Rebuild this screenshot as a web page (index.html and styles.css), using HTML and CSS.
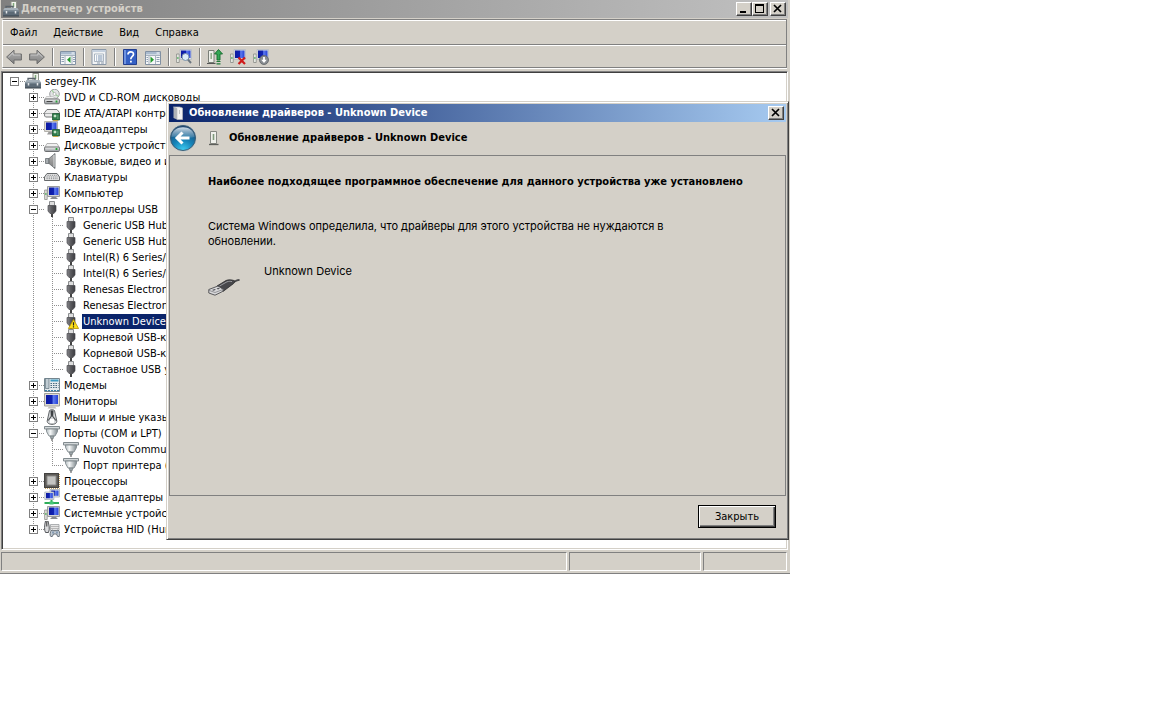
FILE: index.html
```html
<!DOCTYPE html>
<html lang="ru">
<head>
<meta charset="utf-8">
<title>Диспетчер устройств</title>
<link rel="stylesheet" href="styles.css">
</head>
<body>
<svg class="sprite" aria-hidden="true">
  <defs>
    <linearGradient id="g-steel" x1="0" y1="0" x2="0" y2="1"><stop offset="0" stop-color="#fafafa"/><stop offset="1" stop-color="#8f9498"/></linearGradient>
    <linearGradient id="g-funnel" x1="0" y1="0" x2="1" y2="0"><stop offset="0" stop-color="#b3bcc0"/><stop offset=".35" stop-color="#f6f8f8"/><stop offset="1" stop-color="#7f898e"/></linearGradient>
    <linearGradient id="g-dark" x1="0" y1="0" x2="1" y2="0"><stop offset="0" stop-color="#86868a"/><stop offset=".45" stop-color="#5c5c60"/><stop offset="1" stop-color="#3c3c40"/></linearGradient>
    <linearGradient id="g-screen" x1="0" y1="0" x2="1" y2="0"><stop offset="0" stop-color="#0d1aa0"/><stop offset=".5" stop-color="#0f22b4"/><stop offset=".6" stop-color="#5f7cf0"/><stop offset="1" stop-color="#2440d6"/></linearGradient>
    <linearGradient id="g-arrow" x1="0" y1="0" x2="0" y2="1"><stop offset="0" stop-color="#b4b4b4"/><stop offset="1" stop-color="#7e7e7e"/></linearGradient>
    <radialGradient id="g-back" cx=".5" cy="1" r=".95"><stop offset="0" stop-color="#3fd0f5"/><stop offset=".45" stop-color="#1583b8"/><stop offset="1" stop-color="#1c4470"/></radialGradient>
    <linearGradient id="g-gloss" x1="0" y1="0" x2="0" y2="1"><stop offset="0" stop-color="#e6f0f6" stop-opacity=".9"/><stop offset="1" stop-color="#9fc0d4" stop-opacity=".25"/></linearGradient>
  </defs>
  <symbol id="i-root" viewBox="0 0 16 16">
    <rect x="8" y=".5" width="5.500" height="8" fill="#f2f4ee" stroke="#8f948a"/><path d="M10.500 2v4" stroke="#7fa878" stroke-width="1.500"/>
    <path d="M3 8V5.500h7V8" fill="none" stroke="#5b646c" stroke-width="1.300"/>
    <path d="M1.500 7h13L16 9.500H0z" fill="#a5b0b9"/><path d="M0 9.500h16V15H0z" fill="#5c6a76"/><path d="M0 9.500h16v1H0z" fill="#8594a1"/><path d="M0 15h16" stroke="#39434b"/>
    <path d="M3.500 10v2.500M12.500 10v2.500" stroke="#e2e5e8" stroke-width="1.500"/>
  </symbol>
  <symbol id="i-dvd" viewBox="0 0 16 16">
    <circle cx="10.500" cy="5" r="4.800" fill="#e4e6e6" stroke="#9c9fa1"/><path d="M10.500 5 8 1.200M10.500 5l4 2.500" stroke="#9fd09a" stroke-width="1.200"/><circle cx="10.500" cy="5" r="1.500" fill="#fff" stroke="#999" stroke-width=".6"/>
    <path d="M2.500 7.500h6l5 2.500H.8z" fill="#efefef" stroke="#b0b0b0" stroke-width=".6"/>
    <rect x=".6" y="10" width="14.800" height="4.800" rx="1" fill="url(#g-steel)" stroke="#6c6e70" stroke-width="1"/><path d="M2.500 12.500h6" stroke="#444"/><path d="M12.500 11.500v2" stroke="#29a338" stroke-width="1.800"/>
  </symbol>
  <symbol id="i-disk" viewBox="0 0 16 16">
    <path d="M3 6.500h10l2.400 4H.6z" fill="#f0f0f0" stroke="#a2a2a2" stroke-width=".8"/>
    <rect x=".6" y="10" width="14.800" height="4.500" rx="1" fill="url(#g-steel)" stroke="#6c6e70"/><path d="M12.500 11v2" stroke="#29a338" stroke-width="1.800"/>
  </symbol>
  <symbol id="i-card" viewBox="0 0 8 8">
    <path d="M.5.500h7v6.500h-7z" fill="#2f7d4b" stroke="#215a36" stroke-width=".8"/><path d="M2 2h2v2H2zM5 3h1.500M5 5h1.500" fill="#c4e2c8" stroke="#c4e2c8" stroke-width=".5"/><path d="M1 7.500h5" stroke="#c8a94a"/>
  </symbol>
  <symbol id="i-ide" viewBox="0 0 16 16">
    <path d="M3 4.500h10l2.400 3v3.500l-1 1H1.600l-1-1V7.500z" fill="#ececec" stroke="#77797b"/><path d="M1 8.500h14" stroke="#a8aaab"/>
    <use href="#i-card" x="8" y="8" width="8" height="8"/>
  </symbol>
  <symbol id="i-monitor" viewBox="0 0 16 16">
    <path d="M.5.500h15v12.500H.5z" fill="#dcdad4" stroke="#a3a19b"/><path d="M2 2h12v9H2z" fill="url(#g-screen)"/><path d="M5 13.500h6l1.500 2h-9z" fill="#c3c1bb"/>
  </symbol>
  <symbol id="i-video" viewBox="0 0 16 16">
    <path d="M.5.500h13v10H.5z" fill="#dcdad4" stroke="#b4b2ac"/><path d="M2 1.500h10.500V9H2z" fill="url(#g-screen)"/><path d="M4.500 11h4l1 2.500H3z" fill="#999"/>
    <use href="#i-card" x="8" y="8" width="8" height="8"/>
  </symbol>
  <symbol id="i-sound" viewBox="0 0 16 16">
    <path d="M1.500 5.500H5v5H1.500z" fill="#a7adb0" stroke="#686d71" stroke-width=".8"/><path d="M5 5.500 11 .5v15L5 10.500z" fill="url(#g-arrow)" stroke="#62676b" stroke-width=".8"/><path d="M10 2v12" stroke="#dcdfe0"/>
  </symbol>
  <symbol id="i-keyboard" viewBox="0 0 16 16">
    <path d="M3 4.500h10l2.500 3.500v3.500H.5V8z" fill="#e2e2e2" stroke="#66696b"/><path d="M3.500 6.300h9.500M2.500 8h11.500M2.500 9.700h11.500" stroke="#888b8e" stroke-dasharray="1.200 1"/>
  </symbol>
  <symbol id="i-computer" viewBox="0 0 16 16">
    <path d="M.6 5h2.600v9.500H.6z" fill="#e0e0da" stroke="#90918d" stroke-width=".8"/><path d="M1.900 8v2" stroke="#39a545"/>
    <path d="M3.500 1.500h12v10h-12z" fill="#d7d7d3" stroke="#9b9c9f"/><path d="M5 2.500h9.500v7.500H5z" fill="url(#g-screen)"/><path d="M8 12h4l2 2H6z" fill="#888b90"/>
  </symbol>
  <symbol id="i-usb" viewBox="0 0 16 16">
    <path d="M5.500.500h5V5h-5z" fill="#dedede" stroke="#8c8e90"/><path d="M4 4.500h8V10l-2 2.500H6L4 10z" fill="url(#g-dark)" stroke="#4c4c50" stroke-width=".7"/><path d="M7 12.500h2V16H7z" fill="#444"/>
  </symbol>
  <symbol id="i-usb-warn" viewBox="0 0 16 16">
    <use href="#i-usb" width="16" height="16"/><path d="M10.500 6.500 15.600 15.500H5.400z" fill="#ffe21a" stroke="#b39000" stroke-width=".8"/><path d="M10.500 9.300v3.200M10.500 13.200v1.200" stroke="#222" stroke-width="1.200"/>
  </symbol>
  <symbol id="i-modem" viewBox="0 0 16 16">
    <path d="M.5 1.500h15v13H.5z" fill="#e4e9ec" stroke="#75868f"/><path d="M1.500 1.500h3.500v10H1.500z" fill="#c0ccd3" stroke="#617480" stroke-width=".7"/><path d="M6.500 2.500h8v2h-8z" fill="#3d9ac2"/><path d="M6.500 6.500h8M6.500 8.500h8M6.500 10.500h8" stroke="#4a6b80" stroke-dasharray="1.500 1"/><path d="M1 13.500h14" stroke="#3782a8" stroke-dasharray="2 1"/>
  </symbol>
  <symbol id="i-mouse" viewBox="0 0 16 16">
    <path d="M5.500 1.500C6 .5 10 .5 10.500 1.500l2.300 10.500c.5 4.500-10 4.500-9.600 0z" fill="#d6d8da" stroke="#5f6366"/><path d="M6.500 1.500h3L9.200 7H6.800z" fill="#3c4043"/><path d="M4.200 11.500 7.500 7h1l3.300 4.500" fill="none" stroke="#4c5053" stroke-width="1.200"/><path d="M6 10h4v4H6z" fill="#fff"/>
  </symbol>
  <symbol id="i-port" viewBox="0 0 16 16">
    <path d="M.5 1.500h15v2.500H.5z" fill="#d3d8da" stroke="#828b8f"/><path d="M2.500 4h11v2.500L11 11H5L2.500 6.500z" fill="url(#g-funnel)" stroke="#7f888c" stroke-width=".9"/><path d="M6 11h4l-1 3H7z" fill="#9aa3a7" stroke="#6c7579" stroke-width=".6"/><path d="M8 13.500V16" stroke="#777" stroke-width="1.300"/>
  </symbol>
  <symbol id="i-cpu" viewBox="0 0 16 16">
    <path d="M0 0h15v15H0z" fill="#5d5b58"/><path d="M1 15.500h14.500V1" fill="none" stroke="#c2a062" stroke-dasharray="1 1"/><path d="M.5.500h14v14H.5z" fill="none" stroke="#42413f"/><path d="M3 3h9v9H3z" fill="#c4c4c2" stroke="#8c8b88"/>
  </symbol>
  <symbol id="i-network" viewBox="0 0 16 16">
    <path d="M6 .5h9.500V8H6z" fill="#dfe4ea" stroke="#a6adb8" stroke-width=".8"/><path d="M7.200 1.500h7.300v5.300H7.200z" fill="url(#g-screen)"/><path d="M.8 3h9v7.500h-9z" fill="#dfe4ea" stroke="#a6adb8" stroke-width=".8"/><path d="M2 4h6.800v5.300H2z" fill="url(#g-screen)"/><path d="M7.500 11v3M.5 14h14.500" stroke="#2ead59" stroke-width="2"/><path d="M5.500 12.500h4v3h-4z" fill="#45c675"/>
  </symbol>
  <symbol id="i-hid" viewBox="0 0 16 16">
    <path d="M1.500 0h2.500c1 4 2 8 .5 11.500h-3C0 9 .5 4 1.500 0z" fill="#dcdddf" stroke="#54575b"/><path d="M2.800.5v5" stroke="#333"/><path d="M6.500 3.500H15v6H6.500z" fill="#e6e6e6" stroke="#9b9ea1" stroke-width=".8"/><path d="M7.500 5.500h7M7.500 7.500h7" stroke="#888" stroke-dasharray="1 1"/><path d="M8 9c2 1 4 1 6 0 2 1 2.500 5.500 1.200 6.500h-1.500L12.500 13h-3l-1.200 2.500H6.800C5.500 14.500 6 10 8 9z" fill="#c0c9d2" stroke="#5e676f" stroke-width=".9"/><path d="M9 10.500v2M13 10.500v2" stroke="#4d6f95"/>
  </symbol>
  <symbol id="i-left" viewBox="0 0 16 16">
    <path d="M.6 8 8 1.200V5h7.400v6H8v3.800z" fill="url(#g-arrow)" stroke="#6c6c6c"/><path d="M2.500 8 7 3.800V6h7.300" fill="none" stroke="#cfcfcf" stroke-width=".8"/>
  </symbol>
  <symbol id="i-right" viewBox="0 0 16 16">
    <path d="M15.400 8 8 1.200V5H.6v6H8v3.800z" fill="url(#g-arrow)" stroke="#6c6c6c"/><path d="M13.500 8 9 3.800V6H1.700" fill="none" stroke="#cfcfcf" stroke-width=".8"/>
  </symbol>
  <symbol id="i-pane-left" viewBox="0 0 16 16">
    <path d="M.5 2.500h15v13H.5z" fill="#f6f7f8" stroke="#8291a3"/><path d="M1 3h14v2.500H1z" fill="#a9bace"/><path d="M11.500 4h3" stroke="#fff"/><path d="M5 6v9M12 6v9M1 6.500h14" stroke="#a7b2be"/><path d="M1.500 8.500h2.500M1.500 10.500h2.500M1.500 12.500h2.500M13 8.500h2M13 10.500h2M13 12.500h2" stroke="#8fa0b4"/><path d="M10.500 7.500v6.500L7 10.800z" fill="#259a2e"/>
  </symbol>
  <symbol id="i-pane-right" viewBox="0 0 16 16">
    <path d="M.5 2.500h15v13H.5z" fill="#f6f7f8" stroke="#8291a3"/><path d="M1 3h14v2.500H1z" fill="#a9bace"/><path d="M11.500 4h3" stroke="#fff"/><path d="M4 6v9M10.500 6v9M1 6.500h14" stroke="#a7b2be"/><path d="M1.500 8.500H3M1.500 10.500H3M1.500 12.500H3M11.500 8.500h3M11.500 10.500h3M11.500 12.500h3" stroke="#8fa0b4"/><path d="M5.500 7.500v6.500L9 10.800z" fill="#259a2e"/>
  </symbol>
  <symbol id="i-props" viewBox="0 0 16 16">
    <path d="M1 .5h14v15H1z" fill="#f1f3f5" stroke="#8b98a8"/><path d="M1.500 1h13v2H1.500z" fill="#c4d0de"/><path d="M3.500 5h9v7.500h-9z" fill="#fff" stroke="#98a4b2" stroke-width=".8"/><path d="M5 7h1.200M7 7h4.500M5 9h1.200M7 9h4.500M5 11h1.200M7 11h4.500" stroke="#6581a4" stroke-width=".9"/><path d="M6 14h3M10 14h3" stroke="#8b98a8"/>
  </symbol>
  <symbol id="i-help" viewBox="0 0 16 16">
    <path d="M1.500.500h13v15h-13z" fill="#3560c4" stroke="#243f8f"/><path d="M2 1h2v14H2z" fill="#6f93e0"/><path d="M6 5.500C6 2 11.500 2 11.500 5.300c0 2.200-2.700 2.200-2.700 5" fill="none" stroke="#fff" stroke-width="1.700"/><path d="M8 11.800h1.800v1.800H8z" fill="#fff"/>
  </symbol>
  <symbol id="i-scan" viewBox="0 0 16 16">
    <path d="M.6 5h2.600v8.500H.6z" fill="#eceee8" stroke="#878984" stroke-width=".8"/><path d="M1.900 8v2" stroke="#39a545"/><path d="M4 .5h11.500v10H4z" fill="#d7dbe0" stroke="#b5bbc5" stroke-width=".8"/><path d="M5 1.500h9.500V9H5z" fill="url(#g-screen)"/><circle cx="9.500" cy="8" r="3.500" fill="#dcecf8" stroke="#7890a8"/><path d="m12 10.700 3 3.300" stroke="#6c7780" stroke-width="2"/>
  </symbol>
  <symbol id="i-update" viewBox="0 0 16 16">
    <path d="M1.500 1.500h5.500v12H1.500z" fill="#eef0ea" stroke="#7a7f78"/><path d="M4.200 4v6" stroke="#8dab88" stroke-width="1.500"/><path d="M0 14.500h8.500" stroke="#555"/><path d="M11.500.5 15.500 5H13v6h-3V5H7.500z" fill="#34a855" stroke="#156b2d" stroke-width=".9"/><path d="M9.500 12.500h4M9.500 14.800h4" stroke="#1f7b38" stroke-width="1.200"/>
  </symbol>
  <symbol id="i-remove" viewBox="0 0 16 16">
    <path d="M.6 5h2.600v8.500H.6z" fill="#eceee8" stroke="#878984" stroke-width=".8"/><path d="M1.900 8v2" stroke="#39a545"/><path d="M4 .5h11.500v10H4z" fill="#d7dbe0" stroke="#b5bbc5" stroke-width=".8"/><path d="M5 1.500h9.500V9H5z" fill="url(#g-screen)"/><path d="m8.500 8.500 6.500 6.500M15 8.500 8.500 15" stroke="#cf1a1a" stroke-width="2.200"/>
  </symbol>
  <symbol id="i-disable" viewBox="0 0 16 16">
    <path d="M.6 5h2.600v8.500H.6z" fill="#eceee8" stroke="#878984" stroke-width=".8"/><path d="M1.900 8v2" stroke="#39a545"/><path d="M4 .5h11.500v10H4z" fill="#d7dbe0" stroke="#b5bbc5" stroke-width=".8"/><path d="M5 1.500h9.500V9H5z" fill="url(#g-screen)"/><circle cx="11" cy="11" r="4.500" fill="#878b90" stroke="#5f6367" stroke-width=".8"/><path d="M11 8v3.500" stroke="#fff" stroke-width="1.800"/><path d="M8.300 10.800h5.400L11 14z" fill="#fff"/>
  </symbol>
  <symbol id="i-device" viewBox="0 0 16 16">
    <path d="M4.500 1.500h6v12h-6z" fill="#f0f1ec" stroke="#868983"/><path d="M7.500 4v6" stroke="#7f9a7c" stroke-width="1.600"/><path d="M3 14.500h9.500" stroke="#5d5f5b" stroke-width="1.300"/>
  </symbol>
  <symbol id="i-case" viewBox="0 0 16 16">
    <path d="M3.500 2 7 3.500v11L3.500 13z" fill="#aeb2b6"/><path d="M3.500 2h6l3 1v11.500H7V3.500z" fill="#f3f3f1" stroke="#b9bbbd" stroke-width=".7"/><path d="M9.500 5v4" stroke="#c4c6c4"/>
  </symbol>
  <symbol id="i-back" viewBox="0 0 28 28">
    <circle cx="14" cy="14" r="13.500" fill="#bfc6ca"/><circle cx="14" cy="14" r="12.500" fill="url(#g-back)" stroke="#3d5e75"/><path d="M2.500 13C3 0 25 0 25.500 13 20 15 9 12 2.500 13z" fill="url(#g-gloss)"/><path d="M20.500 14H8.500M13.500 8.500 8 14l5.500 5.500" fill="none" stroke="#fff" stroke-width="3"/>
  </symbol>
  <symbol id="i-plug" viewBox="0 0 32 18">
    <path d="M31.500 1c-3 .2-4 1-6 2.500l1 1.300C28 3.500 29.500 3 31.500 3z" fill="#4a4a4c"/><path d="M9 8 18 2.500c2-1 6-.8 8.500.2.800 1-.5 3-2.500 4L15 13.500z" fill="#47474b" stroke="#2b2b2d" stroke-width=".8"/><path d="M11.500 8 19 3.800c2-.6 3.500-.6 5-.2" fill="none" stroke="#9b9ba0"/><path d="M.8 11.500 10 8l5.500 3.500-1 2L7 17.200.8 15z" fill="#d8d8da" stroke="#4b4b4e" stroke-width=".9"/><path d="m4 12 2.500-1 1.500.8-2.500 1zM8.500 10.500l2-.8 1.500.8-2 .9z" fill="#55555a"/><path d="m.8 12.300 6.200 2.200 8.500-3.200" fill="none" stroke="#77777b" stroke-width=".7"/>
  </symbol>
  <symbol id="i-min" viewBox="0 0 10 10"><path d="M1 7h6v2H1z"/></symbol>
  <symbol id="i-max" viewBox="0 0 10 10"><path d="M0 0h9v9H0zM1 2v6h7V2z" fill-rule="evenodd"/></symbol>
  <symbol id="i-close" viewBox="0 0 10 10"><path d="m1 1 7 7M8 1 1 8" stroke="#000" stroke-width="1.700"/></symbol>
</svg>

<main class="window">
  <header class="titlebar">
    <svg class="icon"><use href="#i-root"/></svg>
    <h1 class="titlebar-text">Диспетчер устройств</h1>
    <button class="caption-btn" aria-label="Свернуть"><svg><use href="#i-min"/></svg></button>
    <button class="caption-btn" aria-label="Развернуть"><svg><use href="#i-max"/></svg></button>
    <button class="caption-btn caption-close" aria-label="Закрыть окно"><svg><use href="#i-close"/></svg></button>
  </header>

  <div class="bars">
    <nav class="menubar">
      <button class="menu-item">Файл</button>
      <button class="menu-item">Действие</button>
      <button class="menu-item">Вид</button>
      <button class="menu-item">Справка</button>
    </nav>
    <div class="toolbar">
      <button class="tool" aria-label="Назад"><svg class="icon"><use href="#i-left"/></svg></button>
      <button class="tool" aria-label="Вперед"><svg class="icon"><use href="#i-right"/></svg></button>
      <span class="separator"></span>
      <button class="tool" aria-label="Дерево консоли"><svg class="icon"><use href="#i-pane-left"/></svg></button>
      <span class="separator"></span>
      <button class="tool" aria-label="Свойства"><svg class="icon"><use href="#i-props"/></svg></button>
      <span class="separator"></span>
      <button class="tool" aria-label="Помощь"><svg class="icon"><use href="#i-help"/></svg></button>
      <button class="tool" aria-label="Панель действий"><svg class="icon"><use href="#i-pane-right"/></svg></button>
      <span class="separator"></span>
      <button class="tool" aria-label="Обновить конфигурацию"><svg class="icon"><use href="#i-scan"/></svg></button>
      <span class="separator"></span>
      <button class="tool" aria-label="Обновить драйверы"><svg class="icon"><use href="#i-update"/></svg></button>
      <button class="tool" aria-label="Удалить"><svg class="icon"><use href="#i-remove"/></svg></button>
      <button class="tool" aria-label="Отключить"><svg class="icon"><use href="#i-disable"/></svg></button>
    </div>
  </div>

  <section class="pane">
    <ul class="tree">
      <li class="node root">
        <div class="row"><span class="cell"><button class="toggle" aria-label="Свернуть узел"></button></span><svg class="icon"><use href="#i-root"/></svg><span class="label">sergey-ПК</span></div>
        <ul class="tree">
          <li class="node"><div class="row"><span class="cell"><button class="toggle plus" aria-label="Развернуть узел"></button></span><svg class="icon"><use href="#i-dvd"/></svg><span class="label">DVD и CD-ROM дисководы</span></div></li>
          <li class="node"><div class="row"><span class="cell"><button class="toggle plus" aria-label="Развернуть узел"></button></span><svg class="icon"><use href="#i-ide"/></svg><span class="label">IDE ATA/ATAPI контроллеры</span></div></li>
          <li class="node"><div class="row"><span class="cell"><button class="toggle plus" aria-label="Развернуть узел"></button></span><svg class="icon"><use href="#i-video"/></svg><span class="label">Видеоадаптеры</span></div></li>
          <li class="node"><div class="row"><span class="cell"><button class="toggle plus" aria-label="Развернуть узел"></button></span><svg class="icon"><use href="#i-disk"/></svg><span class="label">Дисковые устройства</span></div></li>
          <li class="node"><div class="row"><span class="cell"><button class="toggle plus" aria-label="Развернуть узел"></button></span><svg class="icon"><use href="#i-sound"/></svg><span class="label">Звуковые, видео и игровые</span></div></li>
          <li class="node"><div class="row"><span class="cell"><button class="toggle plus" aria-label="Развернуть узел"></button></span><svg class="icon"><use href="#i-keyboard"/></svg><span class="label">Клавиатуры</span></div></li>
          <li class="node"><div class="row"><span class="cell"><button class="toggle plus" aria-label="Развернуть узел"></button></span><svg class="icon"><use href="#i-computer"/></svg><span class="label">Компьютер</span></div></li>
          <li class="node">
            <div class="row"><span class="cell"><button class="toggle" aria-label="Свернуть узел"></button></span><svg class="icon"><use href="#i-usb"/></svg><span class="label">Контроллеры USB</span></div>
            <ul class="tree">
              <li class="node"><div class="row"><span class="cell"></span><svg class="icon"><use href="#i-usb"/></svg><span class="label">Generic USB Hub</span></div></li>
              <li class="node"><div class="row"><span class="cell"></span><svg class="icon"><use href="#i-usb"/></svg><span class="label">Generic USB Hub</span></div></li>
              <li class="node"><div class="row"><span class="cell"></span><svg class="icon"><use href="#i-usb"/></svg><span class="label">Intel(R) 6 Series/C200</span></div></li>
              <li class="node"><div class="row"><span class="cell"></span><svg class="icon"><use href="#i-usb"/></svg><span class="label">Intel(R) 6 Series/C200</span></div></li>
              <li class="node"><div class="row"><span class="cell"></span><svg class="icon"><use href="#i-usb"/></svg><span class="label">Renesas Electronics</span></div></li>
              <li class="node"><div class="row"><span class="cell"></span><svg class="icon"><use href="#i-usb"/></svg><span class="label">Renesas Electronics</span></div></li>
              <li class="node"><div class="row"><span class="cell"></span><svg class="icon"><use href="#i-usb-warn"/></svg><span class="label selected">Unknown Device</span></div></li>
              <li class="node"><div class="row"><span class="cell"></span><svg class="icon"><use href="#i-usb"/></svg><span class="label">Корневой USB-концентратор</span></div></li>
              <li class="node"><div class="row"><span class="cell"></span><svg class="icon"><use href="#i-usb"/></svg><span class="label">Корневой USB-концентратор</span></div></li>
              <li class="node"><div class="row"><span class="cell"></span><svg class="icon"><use href="#i-usb"/></svg><span class="label">Составное USB устройство</span></div></li>
            </ul>
          </li>
          <li class="node"><div class="row"><span class="cell"><button class="toggle plus" aria-label="Развернуть узел"></button></span><svg class="icon"><use href="#i-modem"/></svg><span class="label">Модемы</span></div></li>
          <li class="node"><div class="row"><span class="cell"><button class="toggle plus" aria-label="Развернуть узел"></button></span><svg class="icon"><use href="#i-monitor"/></svg><span class="label">Мониторы</span></div></li>
          <li class="node"><div class="row"><span class="cell"><button class="toggle plus" aria-label="Развернуть узел"></button></span><svg class="icon"><use href="#i-mouse"/></svg><span class="label">Мыши и иные указывающие</span></div></li>
          <li class="node">
            <div class="row"><span class="cell"><button class="toggle" aria-label="Свернуть узел"></button></span><svg class="icon"><use href="#i-port"/></svg><span class="label">Порты (COM и LPT)</span></div>
            <ul class="tree">
              <li class="node"><div class="row"><span class="cell"></span><svg class="icon"><use href="#i-port"/></svg><span class="label">Nuvoton Communications</span></div></li>
              <li class="node"><div class="row"><span class="cell"></span><svg class="icon"><use href="#i-port"/></svg><span class="label">Порт принтера (LPT1)</span></div></li>
            </ul>
          </li>
          <li class="node"><div class="row"><span class="cell"><button class="toggle plus" aria-label="Развернуть узел"></button></span><svg class="icon"><use href="#i-cpu"/></svg><span class="label">Процессоры</span></div></li>
          <li class="node"><div class="row"><span class="cell"><button class="toggle plus" aria-label="Развернуть узел"></button></span><svg class="icon"><use href="#i-network"/></svg><span class="label">Сетевые адаптеры</span></div></li>
          <li class="node"><div class="row"><span class="cell"><button class="toggle plus" aria-label="Развернуть узел"></button></span><svg class="icon"><use href="#i-computer"/></svg><span class="label">Системные устройства</span></div></li>
          <li class="node"><div class="row"><span class="cell"><button class="toggle plus" aria-label="Развернуть узел"></button></span><svg class="icon"><use href="#i-hid"/></svg><span class="label">Устройства HID (Human)</span></div></li>
        </ul>
      </li>
    </ul>
  </section>

  <footer class="statusbar"><span class="status"></span><span class="status"></span><span class="status"></span></footer>

  <section class="dialog" role="dialog" aria-labelledby="dialog-title">
    <header class="dialog-titlebar">
      <svg class="icon"><use href="#i-case"/></svg>
      <h2 class="dialog-caption" id="dialog-title">Обновление драйверов - Unknown Device</h2>
      <button class="caption-btn" aria-label="Закрыть диалог"><svg><use href="#i-close"/></svg></button>
    </header>
    <div class="dialog-nav">
      <button class="back" aria-label="Назад"><svg><use href="#i-back"/></svg></button>
      <svg class="icon"><use href="#i-device"/></svg>
      <strong>Обновление драйверов - Unknown Device</strong>
    </div>
    <div class="dialog-body">
      <h3 class="heading">Наиболее подходящее программное обеспечение для данного устройства уже установлено</h3>
      <p class="message">Система Windows определила, что драйверы для этого устройства не нуждаются в обновлении.</p>
      <div class="device">
        <svg class="plug"><use href="#i-plug"/></svg>
        <span>Unknown Device</span>
      </div>
    </div>
    <div class="dialog-footer"><button class="push">Закрыть</button></div>
  </section>
</main>
</body>
</html>
```
FILE: styles.css
```css
* { box-sizing: border-box; }

body {
  margin: 0;
  padding-right: 362px;
  background: #fff;
  color: #000;
  font: 11px/16px "DejaVu Sans Condensed", "DejaVu Sans", sans-serif;
}

h1, h2, h3, p, ul { margin: 0; padding: 0; font: inherit; }
ul { list-style: none; }
button { margin: 0; padding: 0; border: 0; background: none; color: inherit; font: inherit; }

.sprite { position: absolute; width: 0; height: 0; }
.icon { flex: none; display: block; width: 16px; height: 16px; }

.window {
  position: relative;
  padding: 0 2px 2px 1px;
  background: #d4d0c8;
  border-bottom: 1px solid #808080;
}

.titlebar {
  display: flex;
  align-items: center;
  height: 18px;
  margin-bottom: 1px;
  padding: 0 2px;
  background: linear-gradient(to right, #808080, #c0c0c0);
  color: #d4d0c8;
}
.titlebar-text { flex: 1; margin-left: 2px; font-weight: bold; }

.caption-btn {
  display: grid;
  place-items: center;
  width: 16px;
  height: 14px;
  background: #d4d0c8;
  border: 1px solid;
  border-color: #fff #404040 #404040 #fff;
  box-shadow: inset -1px -1px #808080;
}
.caption-btn svg { display: block; width: 10px; height: 10px; }
.caption-close { margin-left: 2px; }

.bars {
  margin: 0 1px;
  border: 1px solid #808080;
  border-left-color: #fff;
  box-shadow: 0 1px #fff;
}
.menubar {
  display: flex;
  gap: 16px;
  padding: 4px 7px 3px;
  border-top: 1px solid #fff;
  border-bottom: 1px solid #808080;
}
.toolbar {
  display: flex;
  align-items: center;
  height: 22px;
  border-top: 1px solid #fff;
}
.tool { display: grid; place-items: center; width: 23px; height: 20px; padding-right: 1px; }
.separator {
  width: 2px;
  height: 18px;
  margin: 0 3px;
  border-left: 1px solid #808080;
  border-right: 1px solid #fff;
}

.pane {
  margin-top: 3px;
  padding: 1px 0 12px 3px;
  background: #fff;
  border: 1px solid;
  border-color: #808080 #fff #fff #808080;
  box-shadow: inset 1px 1px #404040, inset -1px -1px #d4d0c8;
}

.tree .tree { padding-left: 19px; }
.node {
  background: repeating-linear-gradient(to bottom, #909090 0 1px, transparent 1px 2px) 9px 0 / 1px 100% no-repeat;
}
.node:last-child { background-size: 1px 8px; }
.root { background: none; }
.row { display: flex; height: 16px; align-items: center; white-space: nowrap; }
.cell {
  display: flex;
  align-items: center;
  flex: none;
  width: 20px;
  height: 16px;
  padding-left: 5px;
  background: repeating-linear-gradient(to right, #909090 0 1px, transparent 1px 2px) 9px 8px / 11px 1px no-repeat;
}
.toggle {
  width: 9px;
  height: 9px;
  border: 1px solid #808080;
  background: linear-gradient(#000, #000) center / 5px 1px no-repeat, #fff;
}
.toggle.plus {
  background:
    linear-gradient(#000, #000) center / 5px 1px no-repeat,
    linear-gradient(#000, #000) center / 1px 5px no-repeat,
    #fff;
}
.label { margin-left: 3px; padding: 0 1px; line-height: 15px; }
.selected { background: #0a246a; color: #fff; }

.statusbar {
  display: grid;
  grid-template-columns: 1fr 132px 84px;
  gap: 2px;
  padding: 2px 1px 0 0;
}
.status {
  height: 19px;
  border: 1px solid;
  border-color: #808080 #fff #fff #808080;
}

.dialog {
  position: absolute;
  top: 101px;
  left: 166px;
  right: 1px;
  padding: 1px;
  background: #d4d0c8;
  border: 1px solid;
  border-color: #d4d0c8 #404040 #404040 #d4d0c8;
  box-shadow: inset 1px 1px #fff, inset -1px -1px #808080;
}
.dialog-titlebar {
  display: flex;
  align-items: center;
  height: 18px;
  margin: 1px 1px 0;
  padding: 0 2px 0 1px;
  background: linear-gradient(to right, #0a246a, #a6caf0);
  color: #fff;
}
.dialog-caption { flex: 1; margin-left: 3px; font-weight: bold; }
.dialog-nav {
  display: flex;
  align-items: center;
  height: 33px;
  padding: 0 1px 2px;
}
.back { width: 28px; height: 28px; margin-right: 9px; }
.back svg { display: block; width: 28px; height: 28px; }
.dialog-nav strong { margin-left: 7px; }
.dialog-body {
  min-height: 341px;
  margin: 0 1px;
  padding: 18px 26px 18px 38px;
  border: 1px solid #808080;
}
.heading { font-weight: bold; }
.message {
  max-width: 480px;
  margin-top: 29px;
  font: 11px/15px Inter, "Noto Sans", sans-serif;
}
.device {
  display: flex;
  gap: 24px;
  margin-top: 15px;
  font: 11px/15px Inter, "Noto Sans", sans-serif;
}
.plug { width: 32px; height: 18px; margin-top: 14px; }
.dialog-footer {
  display: flex;
  justify-content: flex-end;
  padding: 9px 11px 10px;
}
.push {
  width: 78px;
  height: 23px;
  background: #d4d0c8;
  border: 1px solid #000;
  box-shadow: inset 1px 1px #fff, inset -1px -1px #404040, inset -2px -2px #808080;
}
```
